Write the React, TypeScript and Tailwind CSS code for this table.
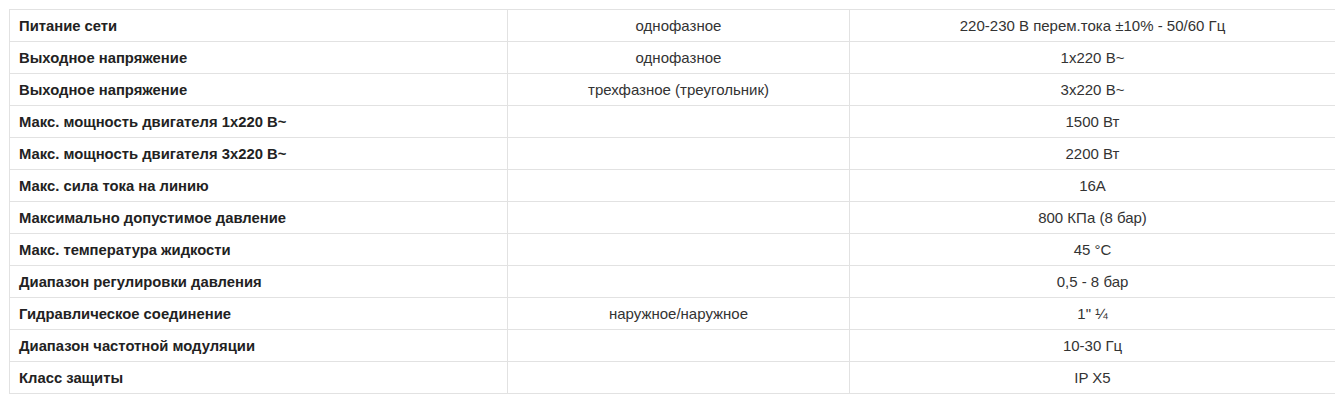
const rows: [string, string, string][] = [
  ["Питание сети", "однофазное", "220-230 В перем.тока ±10% - 50/60 Гц"],
  ["Выходное напряжение", "однофазное", "1x220 В~"],
  ["Выходное напряжение", "трехфазное (треугольник)", "3x220 В~"],
  ["Макс. мощность двигателя 1x220 В~", "", "1500 Вт"],
  ["Макс. мощность двигателя 3x220 В~", "", "2200 Вт"],
  ["Макс. сила тока на линию", "", "16A"],
  ["Максимально допустимое давление", "", "800 КПа (8 бар)"],
  ["Макс. температура жидкости", "", "45 °C"],
  ["Диапазон регулировки давления", "", "0,5 - 8 бар"],
  ["Гидравлическое соединение", "наружное/наружное", "1\" ¼"],
  ["Диапазон частотной модуляции", "", "10-30 Гц"],
  ["Класс защиты", "", "IP X5"],
];

export default function App() {
  return (
    <div className="bg-white w-[1335px] h-[407px] overflow-hidden pt-[9px] pl-[9px]" style={{ fontFamily: '"Liberation Sans", Arial, sans-serif' }}>
      <table className="w-[1327px] border-collapse table-fixed text-[15px]">
        <colgroup>
          <col className="w-[498px]" />
          <col className="w-[342px]" />
          <col />
        </colgroup>
        <tbody>
          {rows.map((r, i) => (
            <tr key={i} className="h-[32px]">
              <td className="border border-[#e2e2e2] pl-[9px] pt-[2px] font-bold text-[14.8px] text-[#222]">{r[0]}</td>
              <td className="border border-[#e2e2e2] pt-[2px] text-center text-[#333]">{r[1]}</td>
              <td className="border border-[#e2e2e2] pt-[2px] text-center text-[#333]">{r[2]}</td>
            </tr>
          ))}
        </tbody>
      </table>
    </div>
  );
}
